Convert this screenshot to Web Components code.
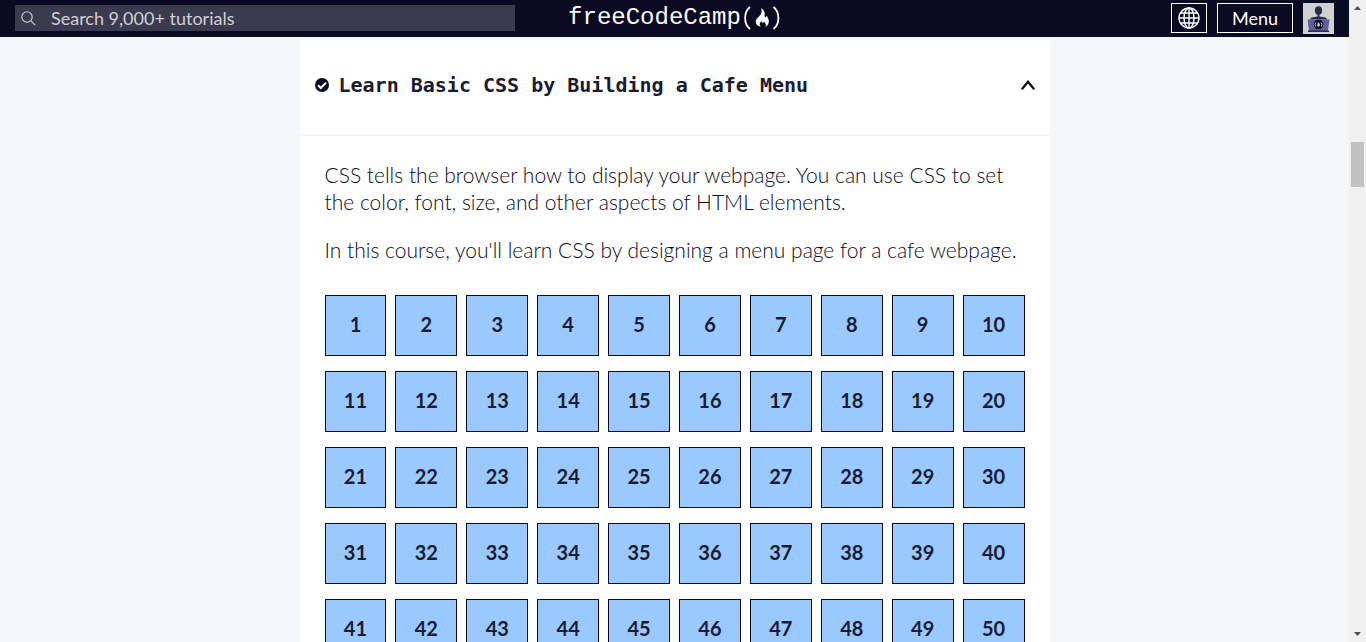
<!DOCTYPE html>
<html lang="en">
<head>
<meta charset="utf-8">
<title>Learn Basic CSS by Building a Cafe Menu | freeCodeCamp.org</title>
<style>
  html, body { height: 100%; margin: 0; }
  body { font-family: Lato, sans-serif; color: #1b1b32; background: #f5f6f7; overflow: hidden; }
</style>
</head>
<body>
<fcc-app>
  <fcc-header slot="header"></fcc-header>
  <fcc-block heading="Learn Basic CSS by Building a Cafe Menu">
    <p>CSS tells the browser how to display your webpage. You can use CSS to set the color, font, size, and other aspects of HTML elements.</p>
    <p>In this course, you'll learn CSS by designing a menu page for a cafe webpage.</p>
    <fcc-steps slot="steps" count="50"></fcc-steps>
  </fcc-block>
</fcc-app>

<script>
const define = (name, html, setup) => {
  const template = document.createElement('template');
  template.innerHTML = html;
  customElements.define(name, class extends HTMLElement {
    constructor() {
      super();
      this.attachShadow({ mode: 'open' }).append(template.content.cloneNode(true));
    }
    connectedCallback() {
      if (setup) setup(this, this.shadowRoot);
    }
  });
};

define('fcc-search', `
  <style>
    :host { display: block; width: 100%; max-width: 500px; }
    form { display: flex; align-items: center; height: 26px; margin: 0; background: #3b3b4f; }
    button { display: flex; padding: 0 0 0 6px; border: 0; background: none; color: #d0d0d5; }
    input { flex: 1; min-width: 0; height: 26px; padding: 0 15px; border: 0; outline: 0; background: none; color: #d0d0d5; font: 18px/26px Lato, sans-serif; }
    input::placeholder { color: #d0d0d5; opacity: 1; }
  </style>
  <form role="search">
    <button type="button" aria-label="Submit search">
      <svg width="15" height="15" viewBox="0 0 15 15" fill="none" stroke="currentColor" stroke-width="1.1"><circle cx="6" cy="6" r="5.2"/><path d="M9.8 9.8 14.2 14.2"/></svg>
    </button>
    <input type="text" aria-label="Search" placeholder="Search 9,000+ tutorials">
  </form>`);

define('fcc-logo', `
  <style>
    :host { display: block; }
    a { display: flex; align-items: center; color: #fff; text-decoration: none; font: 24px/32px "Liberation Mono", monospace; }
    svg { display: block; }
  </style>
  <a href="#" aria-label="freeCodeCamp.org">
    <span>freeCodeCamp</span>
    <svg width="40" height="26" viewBox="0 0 40 26">
      <path d="M9 2C2.500 7 2.500 19 9 24M32.500 2C39 7 39 19 32.500 24" fill="none" stroke="#fff" stroke-width="1.8"/>
      <path d="M20 3C24 5.500 24 8 23.500 11C24 13 25.500 12.500 25.500 10.500C28.500 14.500 29 19 24.500 22C25.500 19.500 24.500 18 22.500 16.500C23 18.500 21 18.500 20.300 16C18 18.500 18.500 20.500 20 22C14.500 20.500 13 16 17 12.500C20 9.500 21.500 7 20 3Z" fill="#fff"/>
    </svg>
  </a>`);

define('fcc-avatar', `
  <style>
    :host { display: block; }
    a, svg { display: block; }
  </style>
  <a href="#" aria-label="Profile">
    <svg width="31" height="31" viewBox="0 0 31 31">
      <path fill="#d0d0d5" d="M0 0h31v31H0z"/>
      <ellipse cx="15.500" cy="7.500" rx="3.600" ry="4.300" fill="#2a2a4a"/>
      <path fill="#2a2a4a" d="M14.500 11h2v2.500l6 1 2 2h-18l2-2 6-1z"/>
      <path fill="#5f5f99" d="M4.500 16.500h22L25 28H6z"/>
      <path fill="#2a2a4a" d="M5 27.500h21V29H5z"/>
      <circle cx="15.500" cy="21.500" r="4.800" fill="#0a0a23"/>
      <path d="M12.800 19.500q-1.500 2 0 4M18.200 19.500q1.500 2 0 4" fill="none" stroke="#d0d0d5" stroke-width=".9"/>
      <path d="M15.500 19q2.500 3 .6 4.500h-1.200q-1.600-1.500.6-4.500" fill="#d0d0d5"/>
    </svg>
  </a>`);

define('fcc-header', `
  <style>
    :host { display: block; background: #0a0a23; border-bottom: 1px solid #0a0a23; }
    header { display: grid; grid-template-columns: 1fr auto 1fr; align-items: center; height: 36px; padding: 0 15px; box-sizing: border-box; }
    nav { display: flex; align-items: center; justify-content: flex-end; gap: 10px; }
    button { display: flex; align-items: center; justify-content: center; box-sizing: border-box; height: 30px; padding: 0 14px; border: 1px solid #fff; background: #0a0a23; color: #fff; font: 18px/28px Lato, sans-serif; }
    .lang { width: 36px; padding: 0; }
  </style>
  <header>
    <fcc-search></fcc-search>
    <fcc-logo></fcc-logo>
    <nav aria-label="Primary">
      <button class="lang" type="button" aria-label="Change language">
        <svg width="22" height="22" viewBox="0 0 22 22" fill="none" stroke="#fff" stroke-width="1.400"><circle cx="11" cy="11" r="10"/><ellipse cx="11" cy="11" rx="5" ry="10"/><path d="M11 1v20M1 11h20M2.500 6h17M2.500 16h17"/></svg>
      </button>
      <button type="button">Menu</button>
      <fcc-avatar></fcc-avatar>
    </nav>
  </header>`);

define('fcc-block', `
  <style>
    :host { display: block; max-width: 750px; margin: 3px auto 0; background: #fff; }
    h3 { margin: 0; }
    .toggle { display: flex; align-items: center; gap: 10px; box-sizing: border-box; width: 100%; height: 96px; padding: 0 15px 4px; border: 0; border-bottom: 2px solid #f5f6f7; background: none; color: #1b1b32; text-align: left; font: bold 20px/28px "DejaVu Sans Mono", monospace; }
    .title { flex: 1; }
    svg { flex: none; display: block; }
    .body { padding: 25px; color: #0a0a23; font-size: 21px; line-height: 27px; font-weight: 300; }
    ::slotted(p) { margin: 0 0 21px; }
    ::slotted(fcc-steps) { margin-top: 32px; }
  </style>
  <h3>
    <button class="toggle" type="button" aria-expanded="true">
      <svg width="14" height="14" viewBox="0 0 14 14"><circle cx="7" cy="7" r="7" fill="#0a0a23"/><path d="M3 7.300 5.800 10 11 4.600" fill="none" stroke="#fff" stroke-width="2"/></svg>
      <span class="title"></span>
      <svg width="14" height="10" viewBox="0 0 14 10" fill="none" stroke="#0a0a23" stroke-width="2.200"><path d="M.8 9.300 7 1.700 13.200 9.300"/></svg>
    </button>
  </h3>
  <div class="body">
    <slot></slot>
    <slot name="steps"></slot>
  </div>`, (host, root) => {
  root.querySelector('.title').textContent = host.getAttribute('heading');
});

define('fcc-steps', `
  <style>
    :host { display: block; }
    ol { display: grid; grid-template-columns: repeat(10, 1fr); gap: 15px 9px; margin: 0; padding: 0; list-style: none; }
    a { display: flex; align-items: center; justify-content: center; box-sizing: border-box; height: 61px; padding-bottom: 2px; border: 1px solid #0a0a23; background: #99c9ff; color: #1b1b32; font-size: 20px; line-height: 27px; font-weight: 700; text-decoration: none; }
  </style>
  <ol></ol>`, (host, root) => {
  const list = root.querySelector('ol');
  for (let n = 1; n <= Number(host.getAttribute('count')); n++) {
    const item = document.createElement('li');
    const link = document.createElement('a');
    link.href = '#step-' + n;
    link.textContent = n;
    item.append(link);
    list.append(item);
  }
});

define('fcc-scrollbar', `
  <style>
    :host { display: flex; flex-direction: column; box-sizing: border-box; width: 17px; height: 100%; padding: 6px 2px; background: #f0f0f0; }
    svg { display: block; flex: none; margin: 0 auto; }
    .track { flex: 1; display: grid; grid-template-rows: 132fr 45fr 445fr; }
    .thumb { grid-row: 2; background: #c1c1c1; }
  </style>
  <svg width="7" height="4" viewBox="0 0 7 4"><path fill="#505050" d="M3.500 0 7 4H0z"/></svg>
  <div class="track"><div class="thumb"></div></div>
  <svg width="7" height="4" viewBox="0 0 7 4"><path fill="#505050" d="M0 0h7L3.500 4z"/></svg>`);

define('fcc-app', `
  <style>
    :host { display: grid; grid-template-columns: minmax(0, 1fr) auto; height: 100vh; }
    .page { display: flex; flex-direction: column; min-height: 0; }
    main { flex: 1; min-height: 0; overflow-y: auto; scrollbar-width: none; }
  </style>
  <div class="page">
    <slot name="header"></slot>
    <main><slot></slot></main>
  </div>
  <fcc-scrollbar aria-hidden="true"></fcc-scrollbar>`);
</script>
</body>
</html>
